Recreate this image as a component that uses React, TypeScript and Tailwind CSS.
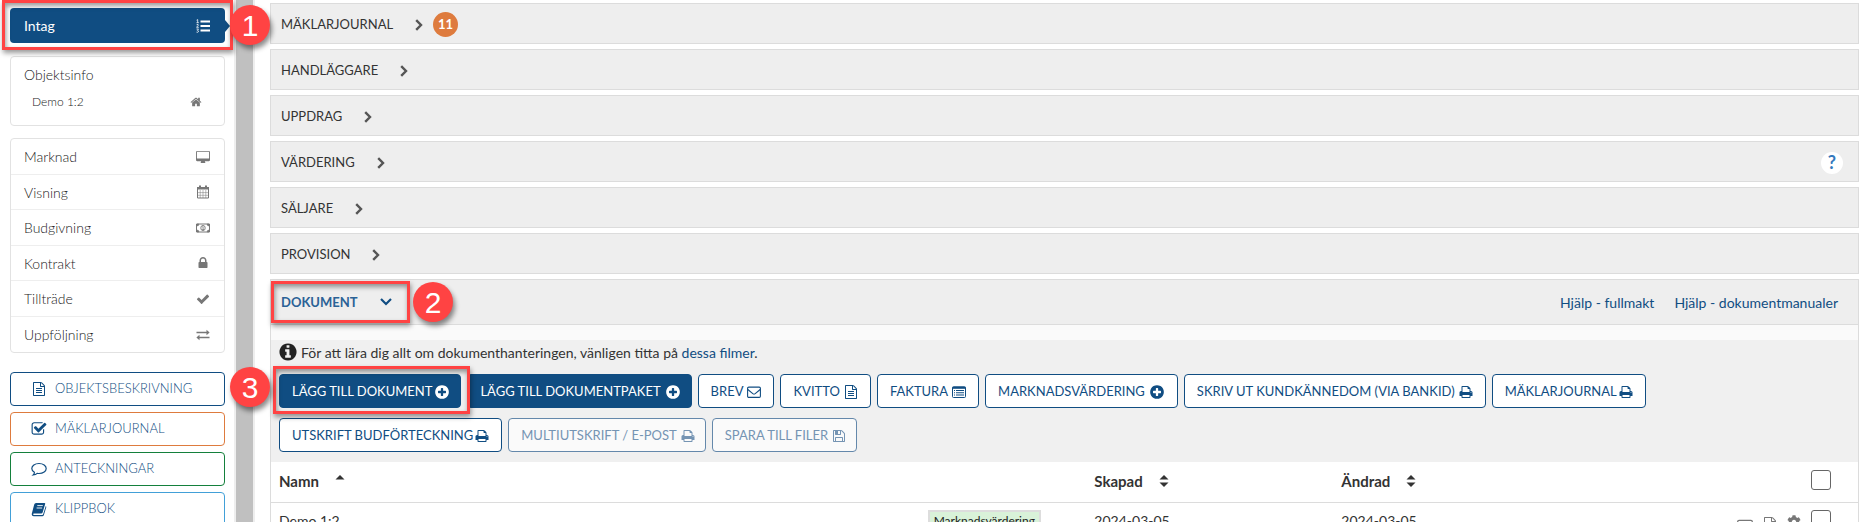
import type { ReactNode } from "react";
import { FaCog } from "react-icons/fa";

const paths = {
  home: "M1472 992v480q0 26-19 45t-45 19h-384v-384h-256v384h-384q-26 0-45-19t-19-45v-480q0-1 .5-3t.5-3l575-474 575 474q1 2 1 6zm223-69l-62 74q-8 9-21 11h-3q-13 0-21-7l-692-577-692 577q-12 8-24 7-13-2-21-11l-62-74q-8-10-7-23.5t11-21.5l719-599q32-26 76-26t76 26l244 204v-195q0-14 9-23t23-9h192q14 0 23 9t9 23v408l219 182q10 8 11 21.5t-7 23.5z",
  plus: "M1344 960v-128q0-26-19-45t-45-19h-256v-256q0-26-19-45t-45-19h-128q-26 0-45 19t-19 45v256h-256q-26 0-45 19t-19 45v128q0 26 19 45t45 19h256v256q0 26 19 45t45 19h128q26 0 45-19t19-45v-256h256q26 0 45-19t19-45zm320-64q0 209-103 385.5t-279.5 279.5-385.5 103-385.5-103-279.5-279.5-103-385.5 103-385.5 279.5-279.5 385.5-103 385.5 103 279.5 279.5 103 385.5z",
  info: "M1152 1376v-160q0-14-9-23t-23-9h-96v-512q0-14-9-23t-23-9h-320q-14 0-23 9t-9 23v160q0 14 9 23t23 9h96v320h-96q-14 0-23 9t-9 23v160q0 14 9 23t23 9h448q14 0 23-9t9-23zm-128-896v-160q0-14-9-23t-23-9h-192q-14 0-23 9t-9 23v160q0 14 9 23t23 9h192q14 0 23-9t9-23zm640 416q0 209-103 385.5t-279.5 279.5-385.5 103-385.5-103-279.5-279.5-103-385.5 103-385.5 279.5-279.5 385.5-103 385.5 103 279.5 279.5 103 385.5z",
  print: "M448 1536h896v-256h-896v256zm0-640h896v-384h-160q-40 0-68-28t-28-68v-160h-640v640zm1152 64q0-26-19-45t-45-19-45 19-19 45 19 45 45 19 45-19 19-45zm128 0v416q0 13-9.5 22.5t-22.5 9.5h-224v160q0 40-28 68t-68 28h-960q-40 0-68-28t-28-68v-160h-224q-13 0-22.5-9.5t-9.5-22.5v-416q0-79 56.5-135.5t135.5-56.5h64v-544q0-40 28-68t68-28h672q40 0 88 20t76 48l152 152q28 28 48 76t20 88v256h64q79 0 135.5 56.5t56.5 135.5z",
  check: "M1671 566q0 40-28 68l-724 724-136 136q-28 28-68 28t-68-28l-136-136-362-362q-28-28-28-68t28-68l136-136q28-28 68-28t68 28l294 295 656-657q28-28 68-28t68 28l136 136q28 28 28 68z",
  lock: "M640 768h512v-192q0-106-75-181t-181-75-181 75-75 181v192zm832 96v576q0 40-28 68t-68 28h-960q-40 0-68-28t-28-68v-576q0-40 28-68t68-28h32v-192q0-184 132-316t316-132 316 132 132 316v192h32q40 0 68 28t28 68z",
  file: "M1596 380q28 28 48 76t20 88v1152q0 40-28 68t-68 28h-1344q-40 0-68-28t-28-68v-1600q0-40 28-68t68-28h896q40 0 88 20t76 48zm-444-244v376h376q-10-29-22-41l-313-313q-12-12-41-22zm384 1528v-1024h-416q-40 0-68-28t-28-68v-416h-768v1536h1280zm-1024-864q0-14 9-23t23-9h704q14 0 23 9t9 23v64q0 14-9 23t-23 9h-704q-14 0-23-9t-9-23v-64zm736 224q14 0 23 9t9 23v64q0 14-9 23t-23 9h-704q-14 0-23-9t-9-23v-64q0-14 9-23t23-9h704zm0 256q14 0 23 9t9 23v64q0 14-9 23t-23 9h-704q-14 0-23-9t-9-23v-64q0-14 9-23t23-9h704z",
  desktop: "M1728 992v-832q0-13-9.5-22.5t-22.5-9.5h-1600q-13 0-22.5 9.5t-9.5 22.5v832q0 13 9.5 22.5t22.5 9.5h1600q13 0 22.5-9.5t9.5-22.5zm128-832v1088q0 66-47 113t-113 47h-544q0 37 16 77.5t32 71 16 43.5q0 26-19 45t-45 19h-512q-26 0-45-19t-19-45q0-14 16-44t32-70 16-78h-544q-66 0-113-47t-47-113v-1088q0-66 47-113t113-47h1600q66 0 113 47t47 113z",
  floppy: "M512 1536h768v-384h-768v384zm896 0h128v-896q0-14-10-38.5t-20-34.5l-281-281q-10-10-34-20t-39-10v416q0 40-28 68t-68 28h-576q-40 0-68-28t-28-68v-416h-128v1280h128v-416q0-40 28-68t68-28h832q40 0 68 28t28 68v416zm-384-928v-320q0-13-9.5-22.5t-22.5-9.5h-192q-13 0-22.5 9.5t-9.5 22.5v320q0 13 9.5 22.5t22.5 9.5h192q13 0 22.5-9.5t9.5-22.5zm640 32v928q0 40-28 68t-68 28h-1344q-40 0-68-28t-28-68v-1344q0-40 28-68t68-28h928q40 0 88 20t76 48l280 280q28 28 48 76t20 88z",
  checkSquare: "M1472 930v318q0 119-84.5 203.5t-203.5 84.5h-832q-119 0-203.5-84.5t-84.5-203.5v-832q0-119 84.5-203.5t203.5-84.5h832q63 0 117 25 15 7 18 23 3 17-9 29l-49 49q-10 10-23 10-3 0-9-2-23-6-45-6h-832q-66 0-113 47t-47 113v832q0 66 47 113t113 47h832q66 0 113-47t47-113v-254q0-13 9-22l64-64q10-10 23-10 6 0 12 3 20 8 20 29zm231-489l-814 814q-24 24-57 24t-57-24l-430-430q-24-24-24-57t24-57l110-110q24-24 57-24t57 24l263 263 647-647q24-24 57-24t57 24l110 110q24 24 24 57t-24 57z",
};

function Glyph({ name, className = "size-[14px]" }: { name: keyof typeof paths; className?: string }) {
  const box = name === "desktop" ? "-64 -64 1920 1792" : "0 0 1792 1792";
  return (
    <svg viewBox={box} fill="currentColor" aria-hidden="true" className={`shrink-0 ${className}`}>
      <path d={paths[name]} />
    </svg>
  );
}

function Drawn({ children, className = "size-[14px]", box = "0 0 14 14" }: { children: ReactNode; className?: string; box?: string }) {
  return (
    <svg viewBox={box} fill="none" stroke="currentColor" aria-hidden="true" className={`shrink-0 ${className}`}>
      {children}
    </svg>
  );
}

const ListOl = () => (
  <Drawn>
    <path d="M4.5 2.5h9.5M4.5 7h9.5M4.5 11.5h9.5" strokeWidth="1.8" />
    <path d="M.6 1.2L1.7.6v3M.5 3.7h2.3M.6 5.7q2-.8 1.8.4L.6 8.3h2.2M.5 10h2L1.4 11.4q1.6.2.9 1.5-.7.8-1.8.2" strokeWidth=".8" />
  </Drawn>
);
const Calendar = () => (
  <Drawn>
    <path d="M1.5 3h11v10h-11z" strokeWidth="1" />
    <path d="M1 2h12v2.500H1z" fill="currentColor" stroke="none" />
    <path d="M4 .5v3M10 .5v3" strokeWidth="2" />
    <path d="M4.2 5v8M7 5v8M9.8 5v8M1.5 7.6h11M1.5 10.3h11" strokeWidth=".5" />
  </Drawn>
);
const Money = () => (
  <Drawn>
    <path d="M.5 3h13v8H.5z" />
    <path d="M1 3h2a2 2 0 0 1-2 2zM13 3v2a2 2 0 0 1-2-2zM1 11V9a2 2 0 0 1 2 2zM13 11h-2a2 2 0 0 1 2-2z" fill="currentColor" strokeWidth=".5" />
    <ellipse cx="7" cy="7" rx="2.2" ry="2.6" strokeWidth=".9" />
    <path d="M6.3 5.9L7.1 5.5v3M6.2 8.5h1.8" strokeWidth=".8" />
  </Drawn>
);
const Exchange = () => (
  <Drawn>
    <path d="M.5 4.5H11M3 9.5h10.5" strokeWidth="1.4" />
    <path d="M10.5 1.8L13.6 4.5l-3.1 2.7zM3.5 6.8L.4 9.5l3.1 2.7z" fill="currentColor" stroke="none" />
  </Drawn>
);
const Comment = () => (
  <Drawn className="size-4" box="0 0 16 16">
    <path d="M8 2.5c4.2 0 7.2 2.2 7.2 5s-3 5-7.2 5q-1 0-1.800-.2-1.500 1.500-4 1.700 1.300-1.100 1.200-2.700C1.700 10.400.8 9 .8 7.500c0-2.800 3-5 7.200-5z" strokeWidth="1.200" />
  </Drawn>
);
const Book = () => (
  <Drawn className="size-4" box="0 0 16 16">
    <path d="M5 2h8.500q1 0 .6 1.200L11.600 11.500q-.3 1-1.400 1H3q-1 0-.9.700 0 .8 1 .8h8.100q.7 0 1-.9L14.800 5q.7.500.4 1.400l-2.300 7.600q-.4 1.200-1.600 1.200H2.700Q.6 15 .7 13L3.200 3.500Q3.600 2 5 2z" fill="currentColor" stroke="none" />
    <path d="M6.300 4.600h5.500M5.600 7h5.500" stroke="white" strokeWidth=".9" />
  </Drawn>
);
const Envelope = ({ className = "size-[14px]" }: { className?: string }) => (
  <Drawn className={className}>
    <rect x=".6" y="2.100" width="12.800" height="10.300" rx="1.200" strokeWidth="1.100" />
    <path d="M.8 4.500L5.800 8.600q1.200.9 2.400 0l5-4.100" strokeWidth="1.100" />
  </Drawn>
);
const ListAlt = () => (
  <Drawn>
    <rect x=".5" y="1.800" width="13" height="10.700" rx="1" />
    <path d="M.5 2.800h13" strokeWidth="2" />
    <path d="M2 5.500h1M2 7.700h1M2 10h1M4 5.500h8M4 7.700h8M4 10h8" strokeWidth="1.100" />
  </Drawn>
);
const Sort = ({ up = false }: { up?: boolean }) => (
  <svg viewBox="0 0 10 14" fill="currentColor" aria-hidden="true" className="h-[14px] w-[10px]">
    <path d="M.5 5.500L5 1l4.500 4.500z" />
    {!up && <path d="M.5 8.500L5 13l4.500-4.500z" />}
  </svg>
);
const Chevron = ({ down = false }: { down?: boolean }) => (
  <svg viewBox="0 0 12 12" fill="none" stroke="currentColor" strokeWidth="2.400" aria-hidden="true" className="size-3">
    {down ? <path d="M1 2l5 5 5-5" strokeWidth="2.200" /> : <path d="M3.200 1.200L8 6l-4.800 4.800" />}
  </svg>
);

const stages: [string, ReactNode][] = [
  ["Marknad", <Glyph name="desktop" />],
  ["Visning", <Calendar />],
  ["Budgivning", <Money />],
  ["Kontrakt", <Glyph name="lock" />],
  ["Tillträde", <Glyph name="check" />],
  ["Uppföljning", <Exchange />],
];

const shortcuts: [string, ReactNode, string][] = [
  ["OBJEKTSBESKRIVNING", <Glyph name="file" />, "border-[#104d82]"],
  ["MÄKLARJOURNAL", <Glyph name="checkSquare" className="size-4" />, "border-[#de7b3e]"],
  ["ANTECKNINGAR", <Comment />, "border-[#14803c]"],
  ["KLIPPBOK", <Book />, "border-[#42a0d8]"],
];

const sections = ["MÄKLARJOURNAL", "HANDLÄGGARE", "UPPDRAG", "VÄRDERING", "SÄLJARE", "PROVISION"];

function ToolButton({ label, icon, kind = "outline", tight = false }: { label: string; icon: ReactNode; kind?: "outline" | "solid" | "muted"; tight?: boolean }) {
  const look = {
    outline: "border-[#104d82] bg-white pr-3 text-[#104d82]",
    solid: "border-[#104d82] bg-[#104d82] pr-[10px] text-white",
    muted: "border-[#6488ab] bg-[#fafafa] pr-[10px] text-[#7594b3]",
  }[kind];
  return (
    <button type="button" disabled={kind === "muted"} className={`flex h-[34px] items-center rounded border pt-px pl-3 text-[13px] whitespace-nowrap ${tight ? "gap-0.5" : "gap-1"} ${look}`}>
      {label}
      {icon}
    </button>
  );
}

function Step({ n, className }: { n: number; className: string }) {
  return (
    <span className={`absolute z-20 flex size-10 items-center justify-center rounded-full bg-[#ff4343] font-['Liberation_Sans',sans-serif] text-[30px] font-normal text-white shadow-[2px_4px_5px_rgba(0,0,0,0.45)] ${className}`}>
      {n}
    </span>
  );
}

function Frame({ className }: { className: string }) {
  return (
    <span className={`pointer-events-none absolute z-10 border-3 border-[#ff4343] shadow-[1px_3px_5px_rgba(0,0,0,0.4),inset_1px_3px_5px_rgba(0,0,0,0.4)] ${className}`} />
  );
}

export default function App() {
  return (
    <div className="flex h-screen overflow-hidden bg-white font-['Lato',sans-serif] text-[14px] text-[#333]">
      <aside className="w-[234px] shrink-0 pr-[9px] pl-[10px] pt-2 text-[#222]">
        <div className="relative">
          <a href="#intag" className="flex h-[35px] items-center justify-between rounded bg-[#104d82] pr-[15px] pl-[14px] text-white">
            Intag
            <ListOl />
          </a>
          <span className="absolute top-3 -right-[5px] border-y-[6px] border-l-[5px] border-y-transparent border-l-[#104d82]" />
          <Frame className="-top-2 -right-2 -bottom-[7px] -left-2" />
          <Step n={1} className="-top-[3px] -right-[45px]" />
        </div>

        <nav className="mt-[13px] h-[70px] rounded border border-[#e2e2e2] px-[13px] pt-[7px] font-light">
          <a href="#objektsinfo" className="block leading-[22px]">Objektsinfo</a>
          <a href="#demo" className="flex items-center justify-between pt-[5px] pr-[9px] pl-2 text-[12px] leading-[22px]">
            Demo 1:2
            <span className="text-[#777]"><Glyph name="home" className="size-3" /></span>
          </a>
        </nav>

        <nav className="mt-3 rounded border border-[#e2e2e2] font-light">
          {stages.map(([label, icon]) => (
            <a key={label} href={`#${label}`} className="flex h-9 items-center justify-between border-b border-[#eee] pr-[14px] pl-[13px] last:border-b-0 even:h-[35px]">
              {label}
              <span className="text-[#777]">{icon}</span>
            </a>
          ))}
        </nav>

        <div className="relative mt-[19px] flex flex-col gap-[6px]">
          {shortcuts.map(([label, icon, border]) => (
            <button key={label} type="button" className={`flex h-[34px] items-center gap-2 rounded border bg-white pb-px pl-5 text-[13px] font-light text-[#104d82] ${border}`}>
              <span className="flex w-4 justify-center">{icon}</span>
              {label}
            </button>
          ))}
          <Step n={3} className="-top-[5px] -right-[45px]" />
        </div>
      </aside>

      <div className="w-[21px] shrink-0 border-x-2 border-[#eee] bg-[#c0c0c0]" />

      <main className="min-w-0 flex-1 pt-[3px] pr-px pl-[15px]">
        <div className="flex flex-col gap-[5px]">
          {sections.map((title) => (
            <section key={title} className="flex h-[41px] items-center border border-[#dcdcdc] bg-[#eee] pt-0.5 pr-[15px] pl-[10px]">
              <button type="button" className="flex items-center gap-5 text-[13px]">
                {title}
                <span className="text-[#555]"><Chevron /></span>
              </button>
              {title === "MÄKLARJOURNAL" && (
                <span className="ml-2 flex size-[25px] items-center justify-center rounded-full bg-[#de7b3e] text-[13px] font-bold text-white">11</span>
              )}
              {title === "VÄRDERING" && (
                <button type="button" className="ml-auto flex size-[22px] items-center justify-center rounded-full bg-white text-[18px] font-bold text-[#3579bd]">?</button>
              )}
            </section>
          ))}

          <section className="border border-[#dcdcdc] bg-white">
            <header className="relative flex h-[45px] items-center justify-between border-b border-[#dcdcdc] bg-[#eee] pt-px pr-5 pl-[10px]">
              <button type="button" className="flex items-center gap-[22px] text-[13px] font-bold text-[#2b6296]">
                DOKUMENT
                <span className="text-[#104d82]"><Chevron down /></span>
              </button>
              <Frame className="top-px left-0 h-[42px] w-[139px]" />
              <Step n={2} className="top-0.5 left-[142px]" />
              <div className="flex gap-5 text-[#104d82]">
                <a href="#fullmakt">Hjälp - fullmakt</a>
                <a href="#dokumentmanualer">Hjälp - dokumentmanualer</a>
              </div>
            </header>

            <div className="bg-[#fafafa] pt-[15px]">
              <div className="bg-[#f0f0f0] px-2 pt-[3px] pb-[10px]">
                <p className="flex h-[18px] items-center gap-[3px]">
                  <Glyph name="info" className="size-5 -ml-px text-[#222]" />
                  <span>
                    För att lära dig allt om dokumenthanteringen, vänligen titta på <a href="#filmer" className="text-[#104d82]">dessa filmer</a>.
                  </span>
                </p>
                <div className="relative mt-[13px] flex flex-wrap gap-x-[6px] gap-y-[10px]">
                  <ToolButton kind="solid" tight label="LÄGG TILL DOKUMENT" icon={<Glyph name="plus" className="size-4" />} />
                  <ToolButton kind="solid" label="LÄGG TILL DOKUMENTPAKET" icon={<Glyph name="plus" className="size-4" />} />
                  <ToolButton label="BREV" icon={<Envelope />} />
                  <ToolButton label="KVITTO" icon={<Glyph name="file" />} />
                  <ToolButton label="FAKTURA" icon={<ListAlt />} />
                  <ToolButton label="MARKNADSVÄRDERING" icon={<Glyph name="plus" className="size-4" />} />
                  <ToolButton label="SKRIV UT KUNDKÄNNEDOM (VIA BANKID)" icon={<Glyph name="print" />} />
                  <ToolButton tight label="MÄKLARJOURNAL" icon={<Glyph name="print" />} />
                  <ToolButton tight label="UTSKRIFT BUDFÖRTECKNING" icon={<Glyph name="print" />} />
                  <ToolButton kind="muted" label="MULTIUTSKRIFT / E-POST" icon={<Glyph name="print" />} />
                  <ToolButton kind="muted" label="SPARA TILL FILER" icon={<Glyph name="floppy" />} />
                  <Frame className="-top-2 -left-[6px] h-12 w-[197px]" />
                </div>
              </div>
            </div>

            <table className="w-full table-fixed border-collapse text-left">
              <thead>
                <tr className="h-10 border-b border-[#dcdcdc] text-[15px]">
                  <th className="w-[41%] pb-0.5 pl-2"><span className="flex items-center gap-4">Namn <Sort up /></span></th>
                  <th className="w-[10%]" />
                  <th className="w-[247px] pb-0.5 pl-[14px]"><span className="flex items-center gap-4">Skapad <Sort /></span></th>
                  <th className="w-[247px] pb-0.5 pl-[14px]"><span className="flex items-center gap-4">Ändrad <Sort /></span></th>
                  <th className="pr-[27px] pb-1">
                    <input type="checkbox" aria-label="Markera alla" className="ml-auto block size-5 appearance-none rounded-[3px] border border-[#666] bg-white" />
                  </th>
                </tr>
              </thead>
              <tbody>
                <tr className="h-9">
                  <td className="pl-2">Demo 1:2</td>
                  <td className="pl-[6px]">
                    <span className="inline-block border-2 border-[#ddd] bg-[#d9f2d9] px-1 text-[12px] leading-[18px] text-[#222]">Marknadsvärdering</span>
                  </td>
                  <td className="pl-[14px]">2024-03-05</td>
                  <td className="pl-[14px]">2024-03-05</td>
                  <td className="pr-[27px]">
                    <span className="flex items-center justify-end gap-[10px] text-[#777]">
                      <Envelope className="mt-3 size-4" />
                      <Glyph name="file" className="mt-2 size-[14px]" />
                      <FaCog className="mt-1 size-[14px]" />
                      <input type="checkbox" aria-label="Markera Demo 1:2" className="size-5 appearance-none rounded-[3px] border border-[#666] bg-white" />
                    </span>
                  </td>
                </tr>
              </tbody>
            </table>
          </section>
        </div>
      </main>
    </div>
  );
}
